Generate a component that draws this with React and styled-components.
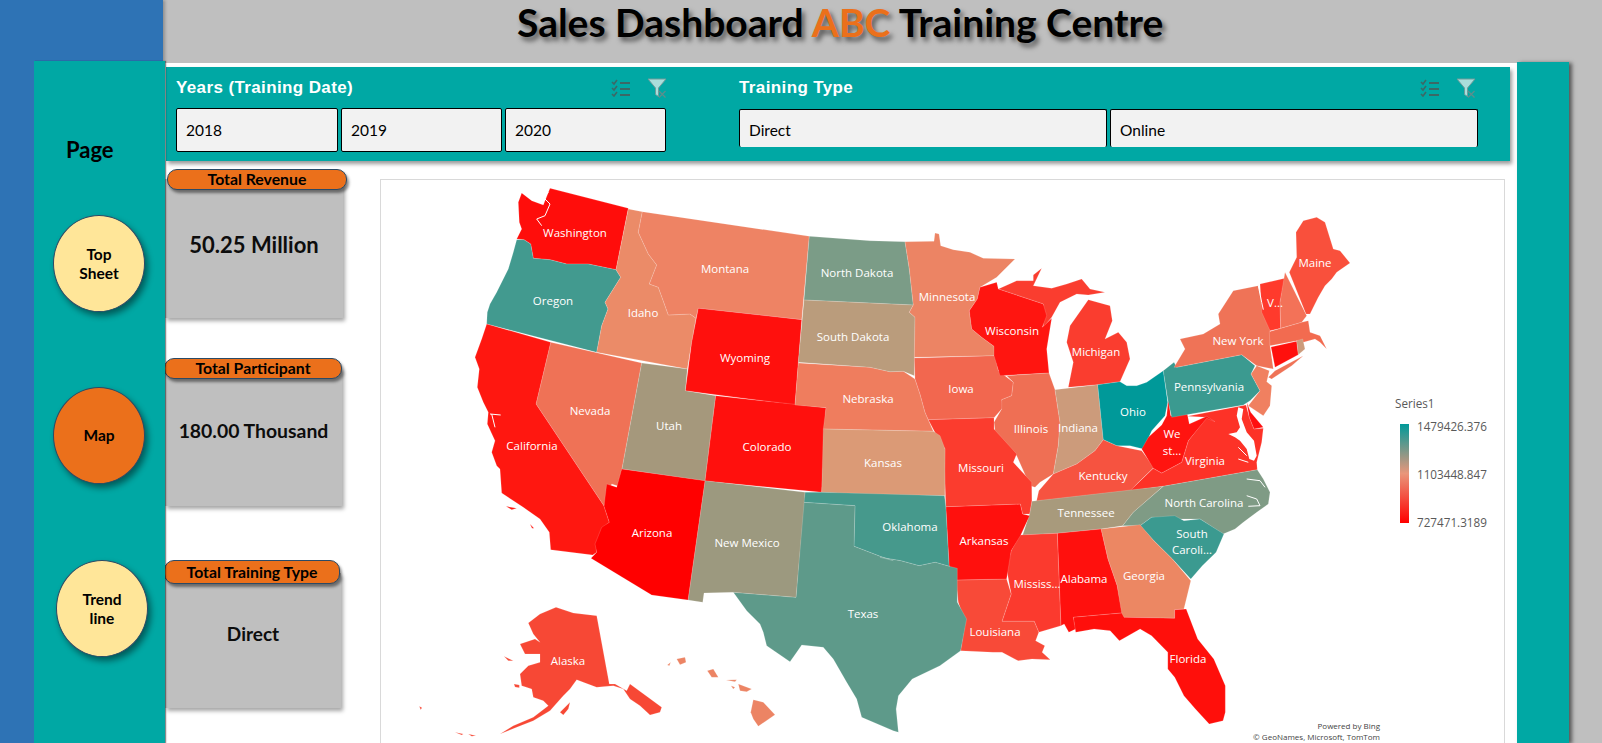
import React from "react";
import styled, { createGlobalStyle } from "styled-components";

const GlobalStyle = createGlobalStyle`
  html, body { margin: 0; padding: 0; height: 100%; overflow: hidden; }
  body { font-family: "Lato", "Open Sans", sans-serif; background: #bfbfbf; }
`;

const TEAL = "#00a8a4";
const ORANGE = "#eb701b";
const SLATE = "#2b4a66";

const Shell = styled.div`
  display: flex;
  width: 1602px;
  height: 743px;
  overflow: hidden;
  background: #bfbfbf;
`;
const BlueRail = styled.aside`
  width: 163px;
  flex: none;
  height: 743px;
  box-sizing: border-box;
  padding: 61px 0 0 34px;
  background: #2e73b5;
  box-shadow: 2px 0 3px rgba(0, 0, 0, 0.25);
  position: relative;
  z-index: 2;
`;
const Nav = styled.nav`
  width: 131px;
  height: 100%;
  background: ${TEAL};
  box-shadow: 1px 0 1px rgba(0, 0, 0, 0.4);
  display: flex;
  flex-direction: column;
  align-items: flex-start;
  padding-top: 74px;
  box-sizing: border-box;
`;
const NavTitle = styled.div`
  margin-left: 32px;
  height: 30px;
  line-height: 30px;
  font-size: 22px;
  font-weight: 700;
  color: #000;
`;
const NavCircle = styled.div`
  width: 92px;
  height: 97px;
  box-sizing: border-box;
  margin-top: ${(p) => p.$top}px;
  margin-left: ${(p) => p.$left}px;
  border-radius: 50%;
  border: 1.5px solid ${SLATE};
  background: ${(p) => (p.$active ? ORANGE : "#ffe699")};
  box-shadow: 3px 4px 6px rgba(0, 0, 0, 0.45);
  display: flex;
  align-items: center;
  justify-content: center;
  text-align: center;
  font-size: 15.5px;
  line-height: 19px;
  font-weight: 700;
  color: #000;
`;
const Main = styled.main`
  flex: 1;
  min-width: 0;
  display: flex;
  flex-direction: column;
`;
const Header = styled.header`
  height: 62px;
  flex: none;
  padding-left: 354px;
  box-sizing: border-box;
`;
const Title = styled.h1`
  margin: 0;
  font-size: 39px;
  line-height: 44px;
  font-weight: 700;
  color: #000;
  white-space: nowrap;
  text-shadow: 3px 4px 5px rgba(0, 0, 0, 0.55);
`;
const Accent = styled.span`
  color: ${ORANGE};
`;
const Body = styled.div`
  flex: 1;
  display: flex;
  min-height: 0;
`;
const Panel = styled.div`
  width: 1352px;
  margin-left: 2px;
  margin-top: 1px;
  background: #fff;
  flex: none;
  overflow: hidden;
`;
const SideBand = styled.div`
  width: 52px;
  flex: none;
  background: ${TEAL};
  box-shadow: 3px 1px 4px rgba(0, 0, 0, 0.55);
`;
const FilterBar = styled.section`
  margin: 4px 7px 0 1px;
  height: 94px;
  background: ${TEAL};
  box-shadow: 2px 3px 4px rgba(0, 0, 0, 0.4);
  display: flex;
`;
const Slicer = styled.div`
  width: ${(p) => p.$width}px;
  margin-left: ${(p) => p.$left}px;
  padding-left: ${(p) => p.$pad}px;
  box-sizing: border-box;
  flex: none;
`;
const SlicerHead = styled.div`
  height: ${(p) => p.$height}px;
  display: flex;
  align-items: center;
  justify-content: space-between;
`;
const SlicerTitle = styled.div`
  font-family: "Liberation Sans", Arial, sans-serif;
  font-weight: 700;
  font-size: 17px;
  letter-spacing: 0.38px;
  color: #fff;
`;
const IconGroup = styled.div`
  display: flex;
  align-items: center;
  gap: 16px;
  margin-right: ${(p) => p.$right}px;
`;
const SlicerRow = styled.div`
  display: flex;
  gap: ${(p) => p.$gap}px;
`;
const SlicerButton = styled.div`
  width: ${(p) => p.$width}px;
  height: ${(p) => p.$height}px;
  box-sizing: border-box;
  background: #f2f2f2;
  border: 1px solid #000;
  border-bottom: ${(p) => (p.$cut ? "none" : "1px solid #000")};
  border-radius: 2px;
  padding-left: 9px;
  padding-top: ${(p) => (p.$cut ? 2 : 0)}px;
  display: flex;
  align-items: center;
  font-size: 15.5px;
  color: #000;
`;
const Content = styled.div`
  display: flex;
  align-items: flex-start;
`;
const Cards = styled.div`
  width: 215px;
  flex: none;
  padding-top: 8px;
`;
const Card = styled.div`
  margin-top: ${(p) => p.$top}px;
  width: ${(p) => p.$width}px;
`;
const Pill = styled.div`
  position: relative;
  z-index: 1;
  width: ${(p) => p.$width}px;
  height: ${(p) => p.$height}px;
  margin-left: ${(p) => p.$left}px;
  box-sizing: border-box;
  border: 1.5px solid ${SLATE};
  border-radius: 10px;
  background: ${ORANGE};
  box-shadow: 2px 3px 3px rgba(0, 0, 0, 0.45);
  text-align: center;
  font-size: 15.8px;
  line-height: ${(p) => p.$height - 3}px;
  font-weight: 700;
  color: #000;
`;
const CardBody = styled.div`
  height: ${(p) => p.$height}px;
  margin-top: -11px;
  box-sizing: border-box;
  padding-top: ${(p) => p.$pad}px;
  background: #bfbfbf;
  box-shadow: 2px 3px 4px rgba(0, 0, 0, 0.35);
  text-align: center;
  font-weight: 700;
  line-height: 30px;
  font-size: ${(p) => p.$size}px;
  color: #0d0d0d;
`;
const MapFrame = styled.div`
  position: relative;
  flex: none;
  width: 1125px;
  height: 600px;
  margin-top: 18px;
  box-sizing: border-box;
  border: 1px solid #d9d9d9;
  background: #fff;
`;
const MapSvg = styled.svg`
  display: block;
  width: 1123px;
  height: 598px;
`;
const Legend = styled.div`
  position: absolute;
  left: 1011px;
  top: 214px;
  font-family: "Open Sans", sans-serif;
  font-size: 11.7px;
  color: #595959;
`;
const LegendTitle = styled.div`
  height: 18px;
  line-height: 18px;
  margin-left: 3px;
`;
const LegendBody = styled.div`
  display: flex;
  gap: 8px;
  margin-left: 8px;
  margin-top: 12px;
`;
const LegendBar = styled.div`
  width: 9px;
  height: 99px;
  background: linear-gradient(to bottom, #009999, #e9967a 50%, #ff0000);
`;
const LegendScale = styled.div`
  height: 110px;
  margin-top: -5px;
  display: flex;
  flex-direction: column;
  justify-content: space-between;
  line-height: 14px;
`;
const Attribution = styled.div`
  position: absolute;
  right: 124px;
  top: 540px;
  font-family: "Open Sans", sans-serif;
  font-size: 8px;
  line-height: 11px;
  text-align: right;
  color: #444;
`;
const StateLabel = styled.text`
  font-family: "Open Sans", sans-serif;
  font-size: 11.5px;
  fill: #fff;
  text-anchor: middle;
  dominant-baseline: central;
`;

const map = (ox, oy, sx, sy) => (...a) => {
  const out = [];
  for (let i = 0; i < a.length; i += 2) out.push(`${(ox + a[i] / sx).toFixed(1)},${(oy + a[i + 1] / sy).toFixed(1)}`);
  return out;
};
const z4 = map(380, 170, 3, 3);
const z5 = map(870, 190, 3, 3);
const z6 = map(400, 470, 3, 3);
const z7 = map(880, 470, 2.172, 3);
const z8 = map(1100, 400, 3, 3);

const STATES = [
  ["#ff0d0b", z4(510,58,745,118,708,302,625,285,560,285,510,272,460,268,452,225,432,212,410,210,425,180,418,160,415,100,425,72,455,95,490,108)],
  ["#429a8f", z4(410,212,432,212,452,225,460,268,510,272,560,285,625,285,708,302,722,325,675,400,684,420,665,470,650,550,320,465,322,430,330,405,350,370,385,300,400,250)],
  ["#eb8b68", z4(745,120,787,128,775,190,805,255,830,288,808,345,835,355,855,410,865,438,930,435,948,448,935,520,922,600,650,550,665,470,684,420,675,400,722,325,708,302)],
  ["#ee8364", z4(787,128,1288,202,1265,452,955,418,948,448,930,435,865,438,855,410,835,355,808,345,830,288,805,255,775,190)],
  ["#ff100d", z4(955,418,1265,452,1245,708,916,665,935,520)],
  ["#ef7256", z4(512,520,785,582,726,900,714,951,695,945,672,1011,468,705)],
  ["#ff1710", [...z4(320,465,512,520,468,705,672,1011), ...z6(628,160,605,180,588,225,590,250,578,258,452,242,448,190,420,150,370,115,305,72,300,0), ...z4(350,890,335,850,345,815,322,765,325,730,310,700,292,655,298,600,285,565,305,510)]],
  ["#a5987c", z4(785,582,922,600,916,665,1007,680,975,936,726,900)],
  ["#ff100d", z4(1007,680,1338,716,1325,970,975,936)],
  ["#ef7d5e", [...z4(1255,582,1470,595), ...z5(60,548,100,547,135,570,150,615,165,670,190,727), ...z4(1330,780,1338,716,1245,708)]],
  ["#7b9c87", [...z4(1288,202), ...z5(0,155,105,158,118,240,130,348), ...z4(1272,393)]],
  ["#ba9c7c", [...z4(1272,393), ...z5(130,348,118,370,135,385,133,560,100,547,60,548,0,535), ...z4(1255,580)]],
  ["#ec8464", z5(105,158,192,157,195,132,207,135,212,170,250,182,300,190,340,208,435,210,380,265,330,295,322,330,298,365,305,420,335,445,372,472,375,500,133,505,135,385,118,370,130,348,118,240)],
  ["#f2674f", z5(133,507,375,500,385,545,430,580,425,620,395,632,400,655,372,686,175,692,165,670,150,615,135,570)],
  ["#fa3d2f", z5(385,300,440,275,490,275,490,258,515,238,490,290,545,298,590,285,635,270,660,300,705,310,655,318,620,315,570,340,545,385,520,415,520,345)],
  ["#ff1510", z5(330,295,380,280,385,300,520,345,530,380,517,415,545,388,530,480,537,552,390,560,372,500,372,472,335,445,305,420,298,365,322,330)],
  ["#fa3d2f", z5(625,375,655,332,720,350,727,395,705,450,745,430,770,460,780,510,750,578,683,587,595,595,610,520,590,460,600,410)],
  ["#ef6f54", z5(410,560,537,552,555,602,570,700,565,770,550,855,510,880,495,895,480,890,440,800,430,790,375,725,372,700,395,660,395,632,425,620,430,580)],
  ["#cc9b7b", z5(555,602,683,587,700,752,675,785,620,825,550,855,565,770,570,700)],
  ["#009999", z5(683,587,750,578,770,590,800,590,830,580,880,545,893,640,885,680,845,725,820,780,780,770,740,770,700,752)],
  ["#f65340", [...z5(700,752,740,770,815,785,852,835,800,885), ...z7(545,65,340,97,345,65), ...z5(550,855,620,825,675,785)]],
  ["#fd3227", z8(262,52,438,18,448,55,462,90,490,88,485,130,470,190,472,212,190,262,90,275,160,208,185,222,245,190,265,125,320,55)],
  ["#ff1410", z8(205,0,212,50,262,45,268,75,320,52,345,68,320,58,265,125,245,190,185,222,160,208,125,150,145,115,185,78,200,50)],
  ["#ff0f0f", z8(440,10,452,40,490,85,462,90,448,55)],
  ["#3b9a90", z5(880,545,912,520,920,535,1115,497,1155,530,1143,555,1170,605,1140,635,1120,648,905,685,893,630)],
  ["#ef7357", z5(912,535,945,480,930,450,1000,435,1050,405,1045,375,1090,305,1165,290,1180,360,1200,400,1200,470,1210,540,1160,530,1115,497,920,535)],
  ["#ef7357", z5(1195,565,1215,545,1300,500,1265,530,1205,570)],
  ["#ff3a2c", z5(1170,285,1245,268,1230,340,1232,418,1200,425,1175,370)],
  ["#f37258", z5(1245,250,1310,380,1295,400,1232,418,1230,340)],
  ["#f9503c", z5(1258,250,1280,205,1278,130,1300,95,1340,85,1365,100,1390,180,1410,185,1440,222,1400,250,1385,270,1365,290,1345,325,1320,375,1308,375)],
  ["#f26b50", z5(1198,428,1295,400,1315,395,1320,430,1350,440,1370,480,1350,460,1335,450,1300,460,1280,455,1200,470)],
  ["#ff100d", z5(1203,474,1280,457,1285,497,1215,535)],
  ["#cc9b7b", z5(1280,455,1298,450,1305,480,1285,497)],
  ["#f08060", z5(1143,555,1160,530,1198,545,1190,578,1205,590,1200,650,1180,680,1135,650,1170,605)],
  ["#7f9b85", [...z8(190,262,472,212,490,240,510,280,505,315,470,340,430,370,405,390), ...z7(745,195,695,150,640,150,590,145,565,170,527,170,550,130,575,100)]],
  ["#a89a7c", z7(310,198,325,135,330,97,615,52,575,100,550,130,527,170,480,180,385,193)],
  ["#3b9a90", z7(565,170,590,145,640,140,660,155,695,150,747,195,730,250,700,290,675,330,635,270,595,215)],
  ["#ec8763", z7(480,180,565,167,595,215,635,270,675,335,660,420,640,422,640,448,525,445,515,350,495,270)],
  ["#ff100d", z7(385,193,480,180,495,270,515,350,525,432,420,445,425,480,410,490,400,465,393,470)],
  ["#fb3a2e", z7(303,198,385,193,393,470,345,490,335,457,265,457,285,375,275,300,285,245)],
  ["#f84a38", z7(165,333,275,330,285,375,265,457,335,457,345,490,338,515,358,530,352,550,370,572,330,570,300,575,265,550,245,550,175,545,185,460,170,400)],
  ["#ff100d", z7(143,113,305,105,310,135,325,140,305,200,285,245,275,330,165,333,150,290)],
  ["#fb3c2e", [...z5(175,692,372,686,372,720,440,795,430,820,485,880), ...z7(330,95,325,135,310,135,305,105,143,113,140,0), ...z5(225,780,200,740)]],
  ["#db9a76", [...z4(1330,780), ...z5(190,727,210,740,225,780), ...z7(141,80,0,78), ...z6(1265,70)]],
  ["#46998c", [...z6(1215,70,1265,70), ...z7(140,80,143,113,150,292,120,280,85,290,45,275,0,265), ...z6(1480,275,1440,262,1362,232,1365,110,1210,100)]],
  ["#5e9a8a", [...z6(1210,100,1365,110,1362,232,1440,262,1480,275), ...z7(0,265,45,275,85,290,120,280,150,292,168,298,168,400,188,450,175,545,130,590,70,630,40,680,35,720,40,790), ...z6(1480,785,1385,745,1370,690,1340,640,1300,570,1270,535,1205,528,1190,550,1170,578,1100,530,1090,490,1080,465,1040,425,1000,370,1188,385)]],
  ["#9c997f", z6(915,35,1215,70,1188,385,1000,370,912,372,908,400,864,393)],
  ["#ff0000", z6(665,0,915,35,864,393,755,378,573,268,590,250,585,225,605,175,628,160,612,112,620,45,650,55)],
  ["#ff0f0b", z7(420,445,525,432,530,445,640,448,640,422,665,420,690,510,725,570,750,650,750,730,745,755,715,765,685,720,660,680,640,625,625,600,625,550,590,500,565,480,520,515,500,485,465,480,425,490)],
  ["#f74835", z6(468,415,520,432,590,440,628,645,645,645,680,665,690,645,785,715,780,730,750,738,720,710,690,690,670,660,640,650,590,655,550,640,530,632,510,660,490,680,450,725,400,755,350,775,300,795,340,770,400,745,445,710,430,695,400,685,395,660,365,650,360,615,385,590,420,580,420,555,375,555,360,525,405,510,420,520,400,495,385,462,420,435)],
  ["#f74835", z6(480,730,510,700,505,720,490,738)],
  ["#f74835", z6(312,562,340,575,325,575)],
  ["#f74835", z6(342,645,358,648,358,656,345,654)],
  ["#f74835", z6(58,712,66,716,62,722)],
  ["#f74835", z6(165,790,190,795,185,798)],
  ["#f74835", z6(205,795,228,800,215,802)],
  ["#ff1710", z6(318,112,350,118,335,122)],
  ["#ff1710", z6(390,165,402,178,396,178)],
  ["#ec8464", z6(1060,692,1090,700,1125,737,1075,772,1060,750,1052,730)],
  ["#ec8464", z6(1015,645,1055,660,1040,668,1020,665)],
  ["#ec8464", z6(978,633,1010,632,1005,638)],
  ["#ec8464", z6(993,650,1005,655,1000,660)],
  ["#ec8464", z6(922,605,940,600,955,625,935,625)],
  ["#ec8464", z6(830,570,855,565,858,580,840,587)],
  ["#ec8464", z6(802,588,812,580,808,590)],
];

const BAY = z8(415,25,430,30,425,60,440,100,462,125,470,170,462,185,448,180,440,150,420,125,405,115,385,105,410,100,420,85,410,50);

const INLETS = [
  z4(505,70,490,85,510,105,495,140,470,150,485,170),
  z4(330,735,362,738),
  z4(335,735,345,775),
  z8(415,145,440,170),
  z8(415,180,445,190),
  z8(440,240,480,245,495,265),
  z8(440,290,470,300,480,320,445,322),
  z5(1165,290,1175,340,1180,362),
];

const LABELS = [
  ["Washington",575,233],["Oregon",553,301],["Idaho",643,313],["Montana",725,269],["North Dakota",857,273],
  ["South Dakota",853,337],["Wyoming",745,358],["Nevada",590,411],["Utah",669,426],["California",532,446],
  ["Colorado",767,447],["Nebraska",868,399],["Kansas",883,463],["Minnesota",947,297],["Wisconsin",1012,331],
  ["Michigan",1096,352],["Iowa",961,389],["Illinois",1031,429],["Indiana",1078,428],["Ohio",1133,412],
  ["Pennsylvania",1209,387],["New York",1238,341],["Maine",1315,263],["V...",1275,303],["Missouri",981,468],
  ["Kentucky",1103,476],["We",1172,434],["st...",1172,451],["Virginia",1205,461],["Arizona",652,533],
  ["New Mexico",747,543],["Oklahoma",910,527],["Texas",863,614],["Alaska",568,661],["Tennessee",1086,513],
  ["North Carolina",1204,503],["South",1192,534],["Caroli...",1192,550],["Arkansas",984,541],["Mississ...",1037,584],
  ["Alabama",1084,579],["Georgia",1144,576],["Louisiana",995,632],["Florida",1188,659],
];

const ChecklistIcon = () => (
  <svg width="20" height="18" viewBox="0 0 20 18" fill="none" stroke="#3c6866" strokeWidth="1.6">
    <path d="M1 3l2 2 3-4M1 9l2 2 3-4M1 15l2 2 3-4" />
    <path d="M9 4h10M9 10h10M9 16h10" strokeWidth="1.9" />
  </svg>
);
const ClearFilterIcon = () => (
  <svg width="20" height="20" viewBox="0 0 20 20">
    <path d="M1 1h18l-7.500 9v8.500L8.500 16.500V10z" fill="#a9dedb" stroke="#6f9b9a" strokeWidth="1" />
    <path d="M12 13l6.500 6.500M18.500 13L12 19.500" stroke="#5d8e8c" strokeWidth="1.3" />
  </svg>
);

function UsMap() {
  return (
    <MapSvg viewBox="381 181 1123 598">
      {STATES.map(([fill, pts], i) => (
        <polygon key={i} points={pts.join(" ")} fill={fill} stroke="#fff" strokeOpacity="0.3" strokeWidth="0.5" />
      ))}
      <polygon points={BAY.join(" ")} fill="#fff" />
      {INLETS.map((pts, i) => (
        <polyline key={i} points={pts.join(" ")} fill="none" stroke="#fff" strokeWidth="1" />
      ))}
      {LABELS.map(([t, x, y]) => (
        <StateLabel key={t} x={x} y={y}>{t}</StateLabel>
      ))}
    </MapSvg>
  );
}

export default function App() {
  return (
    <Shell>
      <GlobalStyle />
      <BlueRail>
        <Nav>
          <NavTitle>Page</NavTitle>
          <NavCircle $top={50} $left={19}>Top<br />Sheet</NavCircle>
          <NavCircle $top={75} $left={19} $active>Map</NavCircle>
          <NavCircle $top={76} $left={22}>Trend<br />line</NavCircle>
        </Nav>
      </BlueRail>
      <Main>
        <Header>
          <Title>Sales Dashboard <Accent>ABC</Accent> Training Centre</Title>
        </Header>
        <Body>
          <Panel>
            <FilterBar>
              <Slicer $width={502} $left={0} $pad={10}>
                <SlicerHead $height={41}>
                  <SlicerTitle>Years (Training Date)</SlicerTitle>
                  <IconGroup $right={1}><ChecklistIcon /><ClearFilterIcon /></IconGroup>
                </SlicerHead>
                <SlicerRow $gap={3}>
                  <SlicerButton $width={162} $height={44}>2018</SlicerButton>
                  <SlicerButton $width={161} $height={44}>2019</SlicerButton>
                  <SlicerButton $width={161} $height={44}>2020</SlicerButton>
                </SlicerRow>
              </Slicer>
              <Slicer $width={739} $left={71} $pad={0}>
                <SlicerHead $height={42}>
                  <SlicerTitle>Training Type</SlicerTitle>
                  <IconGroup $right={2}><ChecklistIcon /><ClearFilterIcon /></IconGroup>
                </SlicerHead>
                <SlicerRow $gap={3}>
                  <SlicerButton $width={368} $height={38} $cut>Direct</SlicerButton>
                  <SlicerButton $width={368} $height={38} $cut>Online</SlicerButton>
                </SlicerRow>
              </Slicer>
            </FilterBar>
            <Content>
              <Cards>
                <Card $top={0} $width={178}>
                  <Pill $width={180} $height={21} $left={2}>Total Revenue</Pill>
                  <CardBody $height={139} $pad={51} $size={22}>50.25 Million</CardBody>
                </Card>
                <Card $top={40} $width={177}>
                  <Pill $width={178} $height={21} $left={-1}>Total Participant</Pill>
                  <CardBody $height={138} $pad={48} $size={19.4}>180.00 Thousand</CardBody>
                </Card>
                <Card $top={54} $width={176}>
                  <Pill $width={176} $height={24} $left={-1}>Total Training Type</Pill>
                  <CardBody $height={135} $pad={46} $size={19}>Direct</CardBody>
                </Card>
              </Cards>
              <MapFrame>
                <UsMap />
                <Legend>
                  <LegendTitle>Series1</LegendTitle>
                  <LegendBody>
                    <LegendBar />
                    <LegendScale>
                      <span>1479426.376</span>
                      <span>1103448.847</span>
                      <span>727471.3189</span>
                    </LegendScale>
                  </LegendBody>
                </Legend>
                <Attribution>Powered by Bing<br />© GeoNames, Microsoft, TomTom</Attribution>
              </MapFrame>
            </Content>
          </Panel>
          <SideBand />
        </Body>
      </Main>
    </Shell>
  );
}
